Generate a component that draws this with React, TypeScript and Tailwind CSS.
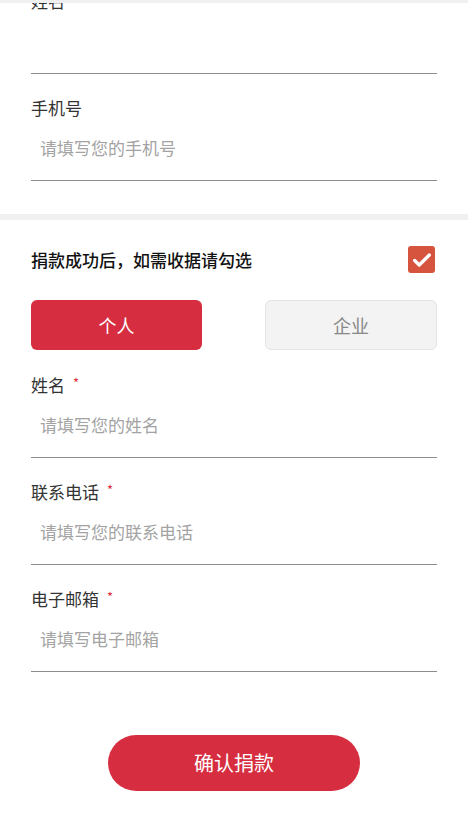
import React from 'react';

function Field({ label, placeholder, required, first }: { label: string; placeholder?: string; required?: boolean; first?: boolean }) {
  return (
    <div className={`border-b border-[#8c8c8c] ${first ? 'pt-[23px]' : 'pt-[22px]'}`}>
      <div className="flex items-center h-6 leading-6 text-[17px] text-[#333]">
        {label}
        {required && <span className="ml-[8px] text-[13px] text-[#d8303f] -mt-[4px]">*</span>}
      </div>
      <div className="mt-[16px] h-6 leading-6 pl-[9px] pb-[20px] box-content text-[17px] text-[#a3a3a3]">
        {placeholder}
      </div>
    </div>
  );
}

export default function App() {
  return (
    <div className="w-[468px] h-[818px] overflow-hidden bg-white" style={{ fontFamily: '"Noto Sans CJK SC", "Noto Sans", sans-serif' }}>
      {/* 顶部灰条 */}
      <div className="relative z-10 h-[3px] bg-[#f0f0f0]"></div>

      {/* 上一段：姓名 / 手机号 */}
      <div className="-mt-[36px] px-[31px] pb-[33px]">
        <Field label="姓名" />
        <Field label="手机号" placeholder="请填写您的手机号" />
      </div>

      <div className="h-[6px] bg-[#f0f0f0]"></div>

      {/* 收据信息 */}
      <div className="px-[31px] pt-[26px]">
        <div className="flex items-center justify-between h-[27px]">
          <span className="text-[17px] font-medium text-[#111]">捐款成功后，如需收据请勾选</span>
          <span className="w-[27px] h-[27px] mr-[2px] rounded-[3px] bg-[#d6533d] flex items-center justify-center">
            <svg width="22" height="22" viewBox="0 0 24 24" fill="none" stroke="white" strokeWidth="3.6" strokeLinecap="round" strokeLinejoin="round">
              <path d="M4 12.5l5 5L20 6.5" />
            </svg>
          </span>
        </div>

        <div className="mt-[27px] flex justify-between">
          <button className="w-[171px] h-[50px] rounded-[6px] bg-[#d62e40] text-white text-[18px]">个人</button>
          <button className="w-[172px] h-[50px] rounded-[6px] bg-[#f3f3f3] border border-[#e4e4e4] text-[#888] text-[18px]">企业</button>
        </div>

        <Field first label="姓名" placeholder="请填写您的姓名" required />
        <Field label="联系电话" placeholder="请填写您的联系电话" required />
        <Field label="电子邮箱" placeholder="请填写电子邮箱" required />

        <div className="mt-[63px] flex justify-center">
          <button className="w-[252px] h-[56px] rounded-full bg-[#d62e40] text-white text-[20px]">确认捐款</button>
        </div>
      </div>
    </div>
  );
}
